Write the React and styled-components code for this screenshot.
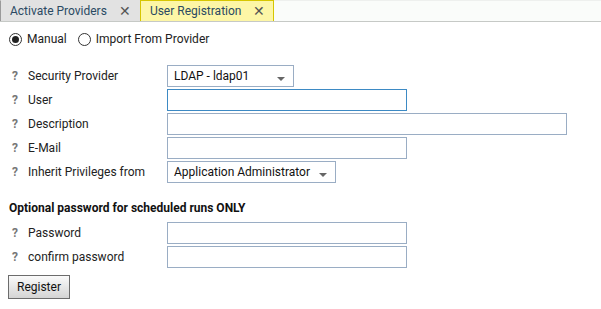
import React from 'react'
import styled, { createGlobalStyle } from 'styled-components';

const GlobalStyle = createGlobalStyle`
    body {
        margin: 0;
        background: #ffffff;
        font-family: Roboto, "Liberation Sans", Arial, sans-serif;
        font-size: 12px;
        color: #1e1e1e;
    }
`;

const TabStrip = styled.div`
    display: flex;
    background: #fafcfa;
    border-top: 1px solid #eef0ee;
    border-bottom: 1px solid #c6c9c6;
    box-sizing: border-box;
    height: 22px;
`;

const Tab = styled.div`
    display: flex;
    align-items: center;
    gap: 12px;
    padding: 0 8px 0 9px;
    margin-bottom: -1px;
    color: #2b4a62;
    font-size: 12px;
    background: ${props => props.active ? "#fdf6a6" : "#e2e2e2"};
    border: 1px solid ${props => props.active ? "#d6c600" : "#e2e2e2"};
    border-left-color: ${props => props.active ? "#d6c600" : "#9a9a9a"};
    border-bottom: none;
    height: 21px;
    box-sizing: border-box;
    margin-top: -1px;
`;

const Close = styled.span`
    font-size: 14px;
    color: #555;
    line-height: 1;
`;

const Content = styled.div`
    padding: 0 8px;
`;

const RadioRow = styled.div`
    display: flex;
    align-items: center;
    height: 18px;
    margin-top: 8px;
`;

const RadioLabel = styled.label`
    display: flex;
    align-items: center;
    gap: 5px;
    margin-right: 10px;
    color: #222;
`;

const RadioDot = styled.span`
    width: 11px;
    height: 11px;
    border-radius: 50%;
    border: 1px solid #333;
    background: #fff;
    display: inline-flex;
    align-items: center;
    justify-content: center;
    margin-left: 1px;
    &::after {
        content: "";
        display: ${props => props.checked ? "block" : "none"};
        width: 7px;
        height: 7px;
        border-radius: 50%;
        background: #222;
    }
`;

const Form = styled.div`
    display: grid;
    grid-template-columns: 159px auto;
    row-gap: 2px;
    margin-top: ${props => props.top}px;
    justify-items: start;
`;

const Label = styled.div`
    display: flex;
    align-items: center;
    height: 22px;
    color: #222;
`;

const Help = styled.span`
    width: 20px;
    padding-left: 4px;
    box-sizing: border-box;
    font-weight: bold;
    color: #777;
`;

const TextInput = styled.input`
    width: ${props => props.w}px;
    height: 22px;
    box-sizing: border-box;
    border: 1px solid ${props => props.focused ? "#3d8ac4" : "#9aadc4"};
    background: #fff;
    padding: 0 5px;
    margin: 0;
    font: inherit;
    outline: none;
`;

const Select = styled.div`
    width: ${props => props.w}px;
    height: 22px;
    box-sizing: border-box;
    border: 1px solid #9aadc4;
    background: #fff;
    display: flex;
    align-items: center;
    justify-content: space-between;
    padding: 0 8px 0 6px;
    color: #111;
`;

const Caret = styled.span`
    width: 0;
    height: 0;
    border-left: 4px solid transparent;
    border-right: 4px solid transparent;
    border-top: 4px solid #666;
    margin-top: 6px;
`;

const Heading = styled.div`
    font-weight: bold;
    color: #111;
    margin: 18px 0 0 1px;
    height: 14px;
    line-height: 14px;
`;

const Button = styled.button`
    display: block;
    margin-top: 7px;
    width: 62px;
    height: 24px;
    border: 1px solid #6c6c6c;
    background: linear-gradient(#fafafa, #d4d4d4);
    font: inherit;
    color: #111;
    padding: 0;
`;

const fields = [
    { label: "Security Provider", select: "LDAP - ldap01", w: 127 },
    { label: "User", w: 240, focused: true },
    { label: "Description", w: 400 },
    { label: "E-Mail", w: 240 },
    { label: "Inherit Privileges from", select: "Application Administrator", w: 169 },
];

const passwords = ["Password", "confirm password"];

function Row({ label, select, w, focused }) {
    return (
        <>
            <Label><Help>?</Help>{label}</Label>
            {select
                ? <Select w={w}><span>{select}</span><Caret /></Select>
                : <TextInput w={w} focused={focused} />}
        </>
    );
}

export default function App() {
    return (
        <>
            <GlobalStyle />
            <TabStrip>
                <Tab>Activate Providers<Close>✕</Close></Tab>
                <Tab active>User Registration<Close>✕</Close></Tab>
            </TabStrip>
            <Content>
                <RadioRow>
                    <RadioLabel><RadioDot checked />Manual</RadioLabel>
                    <RadioLabel><RadioDot />Import From Provider</RadioLabel>
                </RadioRow>
                <Form top={17}>
                    {fields.map(f => <Row key={f.label} {...f} />)}
                </Form>
                <Heading>Optional password for scheduled runs ONLY</Heading>
                <Form top={7}>
                    {passwords.map(p => <Row key={p} label={p} w={240} />)}
                </Form>
                <Button>Register</Button>
            </Content>
        </>
    );
}
